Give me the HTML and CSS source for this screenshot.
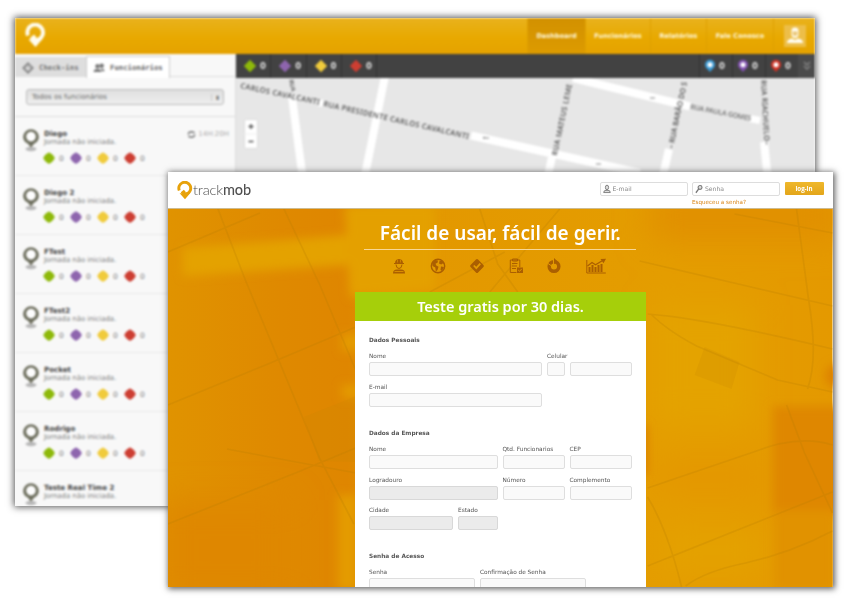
FILE: index.html
```html
<!DOCTYPE html>
<html lang="pt-BR">
<head>
<meta charset="utf-8">
<title>trackmob</title>
<link rel="stylesheet" href="styles.css">
</head>
<body>
<svg class="defs" width="0" height="0">
  <defs>
    <symbol id="gem" viewBox="0 0 14 14"><path d="M7 .8 13.2 7 7 13.2.8 7Z" fill="currentColor"/></symbol>
    <symbol id="clover" viewBox="0 0 12 12"><path d="M6 1 8.300 2.500 9.700 3.800 11.200 6 9.700 8.400 8.300 9.700 6 11.200 3.700 9.700 2.300 8.400.8 6 2.300 3.800 3.700 2.500Z" fill="currentColor" stroke="currentColor" stroke-width="1.200" stroke-linejoin="round"/></symbol>
    <symbol id="person-pin" viewBox="0 0 18 24"><ellipse cx="9" cy="21" rx="5.500" ry="2.200" fill="#b8b8b8"/><path d="M9 1.200a7.900 7.900 0 0 0-7.900 7.700c0 3 2 5.300 4.500 6.700L9 19.400l3.400-3.800c2.500-1.400 4.500-3.700 4.500-6.700A7.900 7.900 0 0 0 9 1.200Z" fill="#6f705f"/><circle cx="9" cy="8.600" r="4.800" fill="#fdfdfd"/></symbol>
    <symbol id="map-pin" viewBox="0 0 12 14"><path d="M6 .8a5 5 0 0 0-5 5C1 9 4 10 6 13c2-3 5-4 5-7.200a5 5 0 0 0-5-5Z" fill="currentColor"/><circle cx="6" cy="5.800" r="2.500" fill="#fff"/></symbol>
    <symbol id="brand" viewBox="0 0 20 24"><path d="M2.800 12A7.500 7.500 0 1 1 13 15.800Q9.500 17.500 7.200 14.600L9.800 12.400" fill="none" stroke="currentColor" stroke-width="3.700"/><path d="M3.200 15.500 10 23l6.500-7.500-3-1.500-5 1.500Z" fill="currentColor"/></symbol>
  </defs>
</svg>

<main class="stage">
  <section class="window dashboard">
    <div class="dash-content">
      <header class="dash-header">
        <svg class="dash-logo"><use href="#brand"/></svg>
        <nav class="dash-nav">
          <a class="nav-item active">Dashboard</a>
          <a class="nav-item employees">Funcionários</a>
          <a class="nav-item reports">Relatórios</a>
          <a class="nav-item contact">Fale Conosco</a>
          <a class="nav-item user"><svg viewBox="0 0 22 22"><rect width="22" height="22" fill="#edbe48"/><path d="M7.500 6.500Q7 2.500 11 2.500t3.500 4v3Q14 13 11 13t-3.500-3.500ZM3 18q0-4 5-4.500l3 1.500 3-1.500q5 .5 5 4.500Z" fill="#fffdf2"/><path d="M8.500 6.500h5v2q-.5 2.500-2.500 2.500T8.500 8.500Z" fill="#e9c676"/></svg></a>
        </nav>
      </header>
      <div class="dash-body">
        <aside class="sidebar">
          <div class="tabs">
            <div class="tab"><svg viewBox="0 0 12 12"><path d="M6 1.500 10.500 6 6 10.500 1.500 6Z" fill="none" stroke="#8c8c8c" stroke-width="2.200"/><path d="m4.500 4 2 2L9 3" fill="none" stroke="#aaa"/></svg><span>Check-ins</span></div>
            <div class="tab selected"><svg viewBox="0 0 12 12"><circle cx="4.500" cy="4.300" r="2.200" fill="#777"/><circle cx="8.700" cy="3.800" r="2.200" fill="#777"/><path d="M.5 10q0-3 4-3t4 3ZM8 6.500q3.500 0 3.500 2.700H9Z" fill="#777"/></svg><span>Funcionários</span></div>
          </div>
          <div class="filter"><div class="select"><span>Todos os funcionários</span><b>⬍</b></div></div>
          <article class="employee"><svg class="pin"><use href="#person-pin"/></svg><div><h3>Diego</h3><p>Jornada não iniciada.</p><div class="counts"><svg class="green"><use href="#clover"/></svg><i>0</i><svg class="purple"><use href="#clover"/></svg><i>0</i><svg class="yellow"><use href="#clover"/></svg><i>0</i><svg class="red"><use href="#clover"/></svg><i>0</i></div></div><div class="elapsed"><svg viewBox="0 0 10 10"><path d="M1.500 5q0-3 4-3L8.500 3M8.500 5q0 3-4 3L1.500 7" fill="none" stroke="#777" stroke-width="1.600"/></svg><span>14H:20H</span></div></article>
          <article class="employee"><svg class="pin"><use href="#person-pin"/></svg><div><h3>Diego 2</h3><p>Jornada não iniciada.</p><div class="counts"><svg class="green"><use href="#clover"/></svg><i>0</i><svg class="purple"><use href="#clover"/></svg><i>0</i><svg class="yellow"><use href="#clover"/></svg><i>0</i><svg class="red"><use href="#clover"/></svg><i>0</i></div></div></article>
          <article class="employee"><svg class="pin"><use href="#person-pin"/></svg><div><h3>FTest</h3><p>Jornada não iniciada.</p><div class="counts"><svg class="green"><use href="#clover"/></svg><i>0</i><svg class="purple"><use href="#clover"/></svg><i>0</i><svg class="yellow"><use href="#clover"/></svg><i>0</i><svg class="red"><use href="#clover"/></svg><i>0</i></div></div></article>
          <article class="employee"><svg class="pin"><use href="#person-pin"/></svg><div><h3>FTest2</h3><p>Jornada não iniciada.</p><div class="counts"><svg class="green"><use href="#clover"/></svg><i>0</i><svg class="purple"><use href="#clover"/></svg><i>0</i><svg class="yellow"><use href="#clover"/></svg><i>0</i><svg class="red"><use href="#clover"/></svg><i>0</i></div></div></article>
          <article class="employee"><svg class="pin"><use href="#person-pin"/></svg><div><h3>Pocket</h3><p>Jornada não iniciada.</p><div class="counts"><svg class="green"><use href="#clover"/></svg><i>0</i><svg class="purple"><use href="#clover"/></svg><i>0</i><svg class="yellow"><use href="#clover"/></svg><i>0</i><svg class="red"><use href="#clover"/></svg><i>0</i></div></div></article>
          <article class="employee"><svg class="pin"><use href="#person-pin"/></svg><div><h3>Rodrigo</h3><p>Jornada não iniciada.</p><div class="counts"><svg class="green"><use href="#clover"/></svg><i>0</i><svg class="purple"><use href="#clover"/></svg><i>0</i><svg class="yellow"><use href="#clover"/></svg><i>0</i><svg class="red"><use href="#clover"/></svg><i>0</i></div></div></article>
          <article class="employee"><svg class="pin"><use href="#person-pin"/></svg><div><h3>Teste Real Time 2</h3><p>Jornada não iniciada.</p></div></article>
        </aside>
        <div class="map-panel">
          <div class="map-bar">
            <div class="stat green"><svg><use href="#gem"/></svg><span>0</span></div>
            <div class="stat purple"><svg><use href="#gem"/></svg><span>0</span></div>
            <div class="stat yellow"><svg><use href="#gem"/></svg><span>0</span></div>
            <div class="stat red"><svg><use href="#gem"/></svg><span>0</span></div>
            <div class="pin-stats">
              <div class="stat blue"><svg><use href="#map-pin"/></svg><span>0</span></div>
              <div class="stat violet"><svg><use href="#map-pin"/></svg><span>0</span></div>
              <div class="stat crimson"><svg><use href="#map-pin"/></svg><span>0</span></div>
              <div class="more"><svg viewBox="0 0 10 12"><path d="m2 2 3 3 3-3M2 6l3 3 3-3" fill="none" stroke="#858585" stroke-width="1.500"/></svg></div>
            </div>
          </div>
          <svg class="map" viewBox="236 78 579 427">
            <g fill="none" stroke="#fff" stroke-width="8">
              <path d="M292 97 303 180M385 76 364 180M471 135.500 640 173M573 78 690 106.500M552 157 547 180M669 149 662 180M764 142 768 180"/>
              <path d="M318 102.500l5 1M750 118.500l10 2" stroke-width="7"/>
            </g>
            <g fill="#5a5a5a" font-family="Noto Sans, sans-serif" font-size="7.500" font-weight="600">
              <text transform="translate(240 88) rotate(12)" textLength="81">CARLOS CAVALCANTI</text>
              <text transform="translate(323 106) rotate(12.800)" textLength="149">RUA PRESIDENTE CARLOS CAVALCANTI</text>
              <text transform="translate(289 80) rotate(78)" font-size="6" textLength="12">RUA</text>
              <text transform="translate(557 156) rotate(-78)" textLength="73">RUA MATEUS LEME</text>
              <text transform="translate(673 149) rotate(-78)" textLength="68">– RUA BARÃO DO S</text>
              <text transform="translate(690 109) rotate(11)" fill="#777" font-size="7" textLength="62">RUA PAULA GOMES</text>
              <text transform="translate(761 80) rotate(87)" textLength="65">RUA RIACHUELO–</text>
            </g>
            <path d="M483 138h6m-6 0 2-1M650 98h5M596 164h5" stroke="#888" fill="none"/>
            <g><rect x="244.500" y="119.500" width="13" height="29" rx="1.500" fill="#fff" stroke="#ddd"/><path d="M244 134h14" stroke="#eee"/><path d="M248.500 126.500h5m-2.500-2.500v5M248.500 141.500h5" stroke="#555" stroke-width="1.400"/></g>
          </svg>
        </div>
      </div>
    </div>
  </section>

  <section class="window landing">
    <header class="land-header">
      <div class="logo"><svg><use href="#brand"/></svg><span>track<b>mob</b></span></div>
      <form class="login">
        <div class="login-field"><svg viewBox="0 0 9 10"><path d="M2.700 3.200q0-2.500 1.800-2.500t1.800 2.500-1.800 2.600-1.800-2.600ZM.8 9q0-2.500 2.500-2.500h2.400q2.500 0 2.500 2.500Z" fill="#ddd" stroke="#777"/></svg><span>E-mail</span></div>
        <div class="password"><div class="login-field"><svg viewBox="0 0 9 10"><circle cx="5.700" cy="3.200" r="2.200" fill="#ddd" stroke="#777" stroke-width="1.200"/><path d="M4.200 4.800 1 9.200" stroke="#777" stroke-width="1.500"/></svg><span>Senha</span></div><a>Esqueceu a senha?</a></div>
        <div class="login-button">log-in</div>
      </form>
    </header>
    <div class="hero">
      <svg class="hero-bg" viewBox="168 209 665 378" preserveAspectRatio="none">
        <defs>
          <filter id="soft" x="-30%" y="-30%" width="160%" height="160%"><feGaussianBlur stdDeviation="5"/></filter>
          <filter id="wide" x="-50%" y="-50%" width="200%" height="200%"><feGaussianBlur stdDeviation="16"/></filter>
          <linearGradient id="base"><stop offset="0" stop-color="#e09300"/><stop offset=".17" stop-color="#df8900"/><stop offset=".27" stop-color="#df8600"/><stop offset=".33" stop-color="#e39700"/><stop offset=".75" stop-color="#e49d00"/><stop offset="1" stop-color="#e49900"/></linearGradient>
        </defs>
        <rect x="168" y="209" width="665" height="378" fill="url(#base)"/>
        <g filter="url(#wide)"><path d="M160 500h130v100H160Z" fill="#df8700"/><path d="M650 190h190v52H650Z" fill="#e19000"/><path d="M655 305h100v120H655Z" fill="#e4a300"/><path d="M655 465h110v25H655Z" fill="#e49500"/><path d="M665 530h100v40H665Z" fill="#e4a200"/></g>
        <g filter="url(#soft)"><path d="M183 248 348 235v30l-165 11Z" fill="#e4a200"/><path d="M345 205h90v84l-85 8Z" fill="#e4a000"/><path d="M342 334h20v17h-20ZM342 385h20v13h-20ZM338 495h20v95h-20Z" fill="#e49b00"/><path d="M773 406h70v110h-70Z" fill="#df8700"/><circle cx="838" cy="376" r="12" fill="#dd8100"/><path d="M775 510h60v80h-60Z" fill="#e19200"/><path d="M640 425h7v50h-7Z" fill="#db7a00"/></g>
        <path d="m705 347 35 15-8 27-37-14ZM304 417l55-22v67l-40-1Z" fill="#c98500" opacity=".2"/>
        <g fill="none" stroke="#b77d00" stroke-width="1.700" opacity=".24">
          <path d="M168 252 260 213M218 209l27 70 75 180 34 65M284 209l36 76 40 95M168 405l100-41 95-40M168 524l130-52 65-27M227 449l80 15 55 10M430 292 505 252M480 209l18 55 20 28M560 209 490 292"/>
          <path d="m640 261 193 45M648 314q55 4 185 35M652 315q18 17 45 31l81 34 55 12M735 214l98 19M797 209l12 90q10 60-1 90M648 488l106-36q45-18 79-7M648 566l120-48 65-26M648 497q20 33 34 90M686 586q20-15 60-23 45-10 87-32M787 405l18 48 28 60"/>
        </g>
      </svg>
      <div class="hero-content">
        <h1><span>Fácil de usar, fácil de gerir.</span></h1>
        <div class="features">
          <svg viewBox="0 0 14 16" width="14" height="16"><path d="M3 5.500Q3 1 7 1t4 4.500Z" fill="currentColor"/><path d="M2 5.500h10M4 6.500q.3 4 3 4t3-4" fill="none" stroke="currentColor"/><path d="M5.500 1.500v3M8.500 1.500v3" stroke="#e39800" stroke-width=".6"/><path d="M1 15.500q0-4 4-4h4q4 0 4 4Z" fill="currentColor"/><path d="M2.500 13.500h9" stroke="#e39800" stroke-width=".8"/></svg>
          <svg viewBox="0 0 16 16" width="16" height="16"><circle cx="8" cy="8" r="6.700" fill="none" stroke="currentColor" stroke-width="1.400"/><path d="M2 4.500 5 2l3 .5-.5 2.200-2 1 .8 1.800 2.200 1.200-1 3.300-1.700 1.500-.5-4-2.800-1.500ZM9.500 3 12 2.500l2.500 4-1.800-1-1.500 1L9 5.500ZM11 8.500l3 .5-2 4-1.500-1Z" fill="currentColor"/></svg>
          <svg viewBox="0 0 16 16" width="16" height="16"><rect x="2.700" y="2.700" width="10.600" height="10.600" rx="1.500" transform="rotate(45 8 8)" fill="currentColor"/><path d="m4.800 7.500 2.500 2.700 4-4.500" fill="none" stroke="#e49b00" stroke-width="1.800"/></svg>
          <svg viewBox="0 0 14 16" width="14" height="16"><path d="M7.500 14.500H1.300V2h9.500v7M3.500 1h5v2h-5ZM3 5.500h5.500M3 8h5M3 10.500h4" fill="none" stroke="currentColor"/><path d="M8 9.500h6V15H8Z" fill="currentColor"/><path d="m9.200 12 1.300 1.300 2.300-2.500" fill="none" stroke="#e39800"/></svg>
          <svg viewBox="0 0 16 16" width="16" height="16"><circle cx="8" cy="8.500" r="4.800" fill="none" stroke="currentColor" stroke-width="3.500"/><path d="M7.500 1v5M2 5.500l3 2" stroke="#e39800"/><path d="m8 0 3.500 3.300L8 6Z" fill="currentColor"/></svg>
          <svg viewBox="0 0 20 16" width="20" height="16"><path d="M.8 2v13h19" fill="none" stroke="currentColor"/><path d="M3.500 14V9M6.500 14V7M9.500 14V9M12.500 14V7M15.500 14V6" stroke="currentColor" stroke-width="2"/><path d="m1.500 8 4.500-3.500 3.500 2.300L17.500 2" fill="none" stroke="currentColor" stroke-width="1.300"/><path d="m14.500 1 5.500-.3-2.500 4.500Z" fill="currentColor"/></svg>
        </div>
        <div class="signup">
          <h2><span>Teste gratis por 30 dias.</span></h2>
          <form class="signup-form">
            <h4>Dados Pessoais</h4>
            <div class="fields"><label class="w173">Nome<span class="input"></span></label><label class="w17">Celular<span class="input"></span></label><label class="w62"><span class="input"></span></label></div>
            <div class="fields"><label class="w173">E-mail<span class="input"></span></label></div>
            <h4 class="later">Dados da Empresa</h4>
            <div class="fields"><label class="w128">Nome<span class="input"></span></label><label class="w62">Qtd. Funcionarios<span class="input"></span></label><label class="w62">CEP<span class="input"></span></label></div>
            <div class="fields"><label class="w128">Logradouro<span class="input disabled"></span></label><label class="w62">Número<span class="input"></span></label><label class="w62">Complemento<span class="input"></span></label></div>
            <div class="fields"><label class="w84">Cidade<span class="input disabled"></span></label><label class="w39">Estado<span class="input disabled"></span></label></div>
            <h4 class="later">Senha de Acesso</h4>
            <div class="fields"><label class="w106">Senha<span class="input"></span></label><label class="w106">Confirmação de Senha<span class="input"></span></label></div>
          </form>
        </div>
      </div>
    </div>
  </section>
</main>
</body>
</html>
```
FILE: styles.css
```css
* { box-sizing: border-box; }
body { margin: 0; background: #fff; font-family: "DejaVu Sans", sans-serif; }
h1, h2, h3, h4, p { margin: 0; }
svg { flex: none; display: block; }
.defs { position: absolute; }
.stage { position: relative; width: 844px; height: 604px; overflow: hidden; }
.window { position: absolute; overflow: hidden; }

.dashboard { left: 15px; top: 18px; width: 800px; height: 488px; box-shadow: 0 0 7px 1px #555; background: #f8f8f8; }
.dash-content { height: 100%; filter: blur(1px); }
.dash-header { height: 36px; display: flex; justify-content: space-between; background: linear-gradient(#e9b21d, #e8a900 55%, #e5a200); }
.dash-logo { width: 21px; height: 25px; margin: 5px 0 0 10px; color: #fffdf0; }
.dash-nav { display: flex; height: 36px; }
.nav-item { width: 67px; display: flex; align-items: center; justify-content: center; color: #fff7db; font-size: 6.6px; font-weight: bold; border-left: 1px solid #dea000; white-space: nowrap; }
.nav-item.active { width: 58px; background: linear-gradient(#d29100, #dd9b00); }
.nav-item.reports { width: 56px; }
.nav-item.employees { width: 65px; }
.nav-item.user { width: 42px; }
.nav-item svg { width: 22px; height: 22px; }
.dash-body { display: flex; height: 452px; }
.sidebar { width: 221px; flex: none; overflow: hidden; border-right: 1px solid #ddd; background: #f8f8f8; color: #666; }
.tabs { height: 23px; padding-top: 2px; display: flex; border-bottom: 1px solid #ddd; }
.tab { width: 71px; height: 20px; margin-top: 1px; padding: 1px 0 0 7px; display: flex; align-items: center; gap: 5px; background: #dedede; font: bold 7.3px "DejaVu Sans Mono", monospace; color: #777; }
.tab svg { width: 12px; height: 12px; }
.tab span { white-space: nowrap; }
.tab.selected { width: 84px; height: 22px; margin-top: 0; padding: 0 0 0 6px; background: #fff; border: 1px solid #ccc; border-bottom: 0; color: #666; }
.filter { height: 40px; padding: 12px 11px; border-bottom: 1px solid #ddd; }
.select { height: 16px; padding: 0 3px 0 5px; display: flex; align-items: center; justify-content: space-between; border: 1px solid #bbb; border-radius: 3px; background: linear-gradient(#dfdfdf, #eee); font-size: 7px; color: #666; }
.select b { padding-left: 3px; border-left: 1px solid #ccc; font-size: 6px; }
.employee { height: 59px; padding: 12px 6px 0 7px; display: flex; gap: 4px; border-bottom: 1px solid #e9e9e9; }
.pin { width: 18px; height: 24px; margin-top: -1px; }
.employee h3 { font-size: 7.1px; line-height: 9px; color: #444; }
.employee p { font-size: 6.9px; line-height: 9px; color: #777; white-space: nowrap; }
.counts { margin-top: 5px; display: flex; align-items: center; }
.counts svg { width: 12px; height: 12px; margin-left: -1px; }
.counts i { width: 16px; padding-left: 4px; font: 7.5px "DejaVu Sans", sans-serif; line-height: 11px; color: #777; }
.elapsed { margin-left: auto; display: flex; height: 10px; gap: 2px; align-items: center; font-size: 7px; color: #aaa; }
.elapsed svg { width: 9px; height: 9px; }
.green { color: #8eb90a; }
.purple { color: #8e65ae; }
.yellow { color: #f0cb3c; }
.red { color: #cd3e32; }
.blue { color: #3c9cd7; }
.violet { color: #8453b4; }
.crimson { color: #d33224; }
.map-panel { width: 579px; flex: none; }
.map-bar { height: 24px; display: flex; background: #424242; }
.stat { width: 35.300px; padding-left: 7px; display: flex; align-items: center; gap: 3px; border-right: 1px solid #343434; }
.stat svg { width: 14px; height: 14px; }
.stat span { color: #e2e2e2; font-size: 8.5px; font-weight: bold; }
.pin-stats { margin-left: auto; display: flex; }
.pin-stats .stat { width: 33px; padding-left: 4px; gap: 3px; border-right: 0; border-left: 1px solid #343434; }
.pin-stats .stat svg { width: 12px; }
.more { width: 17px; display: flex; align-items: center; justify-content: center; background: #4b4b4b; }
.more svg { width: 10px; height: 12px; }
.map { width: 579px; height: 427px; background: #e7e7e7; }

.landing { left: 168px; top: 172px; width: 664.500px; height: 415px; box-shadow: 1px 1px 6px 1px #666; background: #fff; }
.land-header { height: 37px; padding: 8px 9px 0; display: flex; justify-content: space-between; border-bottom: 1px solid #cdbb91; }
.logo { height: 20px; display: flex; align-items: center; color: #e7a20b; }
.logo svg { width: 16px; height: 19px; }
.logo span { color: #505050; font: 300 14.500px/18px Lato, sans-serif; letter-spacing: -.15px; }
.logo b { font-weight: 500; }
.login { display: flex; align-items: flex-start; gap: 4.500px; padding-top: 1.500px; font-size: 6.100px; color: #888; }
.login-field { width: 88px; height: 14px; padding-left: 2px; display: flex; align-items: center; gap: 2px; border: 1px solid #ddd; border-radius: 2px; }
.login-field svg { width: 8px; height: 10px; }
.password a { display: block; padding-top: 2px; line-height: 8px; font-size: 5.600px; color: #d98414; }
.login-button { width: 39px; height: 13.500px; border-radius: 1px; background: linear-gradient(#efb82b, #e3a51a); text-align: center; font: bold 6.200px/13px "Open Sans", sans-serif; color: #fff; }
.hero { position: relative; height: 378px; }
.hero-bg { position: absolute; width: 664.500px; height: 378px; }
.hero-content { position: relative; padding-top: 7px; }
.hero h1 { width: 272px; height: 34px; margin: 0 auto; border-bottom: 1px solid #f8d797; text-align: center; font: 600 19px/34px "Noto Sans", sans-serif; color: #fff; white-space: nowrap; }
.features { width: 214px; height: 16px; margin: 8px 0 0 224px; display: flex; align-items: center; justify-content: space-between; color: #ab5f00; }
.signup { width: 291px; height: 296px; margin: 18px 0 0 187px; overflow: hidden; background: #fff; }
.signup h2 { height: 29px; background: #a6cf0a; text-align: center; color: #fff; font: 600 14.500px/29px "Noto Sans", sans-serif; white-space: nowrap; }
.signup-form { padding: 15px 14px 0; color: #555; }
.signup h4 { height: 13px; font-size: 5.800px; line-height: 8px; white-space: nowrap; }
.signup .later { margin-top: 18.500px; height: 13px; }
.fields { height: 30.700px; display: flex; gap: 5px; }
.fields label { height: 27px; display: flex; flex-direction: column; justify-content: flex-end; font-size: 5.800px; line-height: 8px; white-space: nowrap; }
.input { height: 14px; margin-top: 2px; flex: none; border: 1px solid #dedede; border-radius: 2px; background: #fafafa; }
.input.disabled { background: #ebebeb; border-color: #d8d8d8; }
.w173 { width: 173px; }
.w128 { width: 128.500px; }
.w106 { width: 106px; }
.w84 { width: 84px; }
.w62 { width: 62px; }
.w39 { width: 39.500px; }
.w17 { width: 17.500px; }
```
